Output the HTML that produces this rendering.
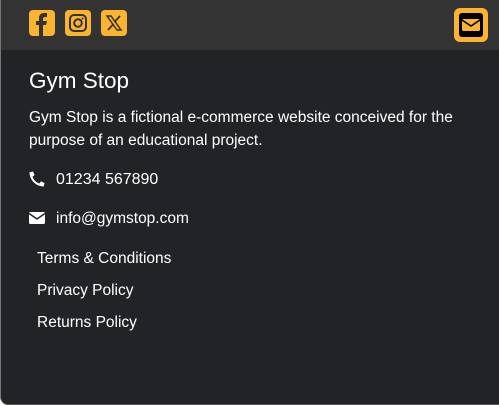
<!DOCTYPE html><html><head><style>
body{margin:0;width:499px;height:405px;background:#fff;overflow:hidden;font-family:"Liberation Sans",sans-serif;}
.w{position:absolute;left:0;top:0;width:498px;height:404px;background:#212326;border-left:1px solid #777;border-bottom:1px solid #555;border-bottom-left-radius:8px;overflow:hidden}
.h{position:absolute;left:0;top:0;width:499px;height:50px;background:#333}
.ic{position:absolute;top:10px;width:26px;height:26px;background:#fbb430;border-radius:4px}
.t{position:absolute;color:#fff;white-space:nowrap}
</style></head><body><div class="w">
<div class="h">
<div class="ic" style="left:28px"><svg width="26" height="26" viewBox="0 0 26 26"><path d="M10 26V15H7v-4h3V8c0-3 2-5 5-5h3v4h-2c-1 0-2 .5-2 2v2h4l-1 4h-3v11z" fill="#333"/></svg></div>
<div class="ic" style="left:64px"><svg width="26" height="26" viewBox="0 0 26 26"><rect x="5" y="5" width="16" height="16" rx="4" fill="none" stroke="#333" stroke-width="2"/><circle cx="13" cy="13" r="3.8" fill="none" stroke="#333" stroke-width="2"/><circle cx="17.5" cy="8.5" r="1" fill="#333"/></svg></div>
<div class="ic" style="left:100px"><svg width="26" height="26" viewBox="0 0 26 26"><path d="M6 6h4l10 14h-4z" fill="none" stroke="#333" stroke-width="1.5"/><path d="M19 6l-5.5 6M7 20l5.5-6" stroke="#333" stroke-width="1.8"/></svg></div>
<div style="position:absolute;left:453px;top:8px;width:34px;height:34px;background:#fbb430;border-radius:6px"><div style="position:absolute;left:5px;top:5px;width:24px;height:24px;background:#000;border-radius:3px"><svg width="24" height="24" viewBox="0 0 24 24"><rect x="3" y="6" width="18" height="12" rx="1.5" fill="#fbb430"/><path d="M3 7l9 6 9-6" fill="none" stroke="#000" stroke-width="1.6"/></svg></div></div>
</div>
<div class="t" style="left:28px;top:68px;font-size:22.5px">Gym Stop</div>
<div class="t" style="left:28px;top:106px;font-size:15.5px;line-height:23px;white-space:normal;width:465px">Gym Stop is a fictional e-commerce website conceived for the purpose of an educational project.</div>
<svg style="position:absolute;left:28px;top:171px" width="16" height="16" viewBox="0 0 16 16"><path d="M15.5 12l-3.5-1.6-1.7 2.1A11 11 0 0 1 3.5 5.7l2.1-1.7L4 0.5 0.5 1.3C0.5 9 7 15.5 14.7 15.5z" fill="#fff"/></svg>
<div class="t" style="left:55px;top:171px;font-size:16px">01234 567890</div>
<svg style="position:absolute;left:28px;top:212px" width="16" height="12" viewBox="0 0 16 12"><rect width="16" height="12" rx="1.5" fill="#fff"/><path d="M0 1.5l8 5.5 8-5.5" fill="none" stroke="#212326" stroke-width="1.5"/></svg>
<div class="t" style="left:55px;top:210px;font-size:15.5px">info@gymstop.com</div>
<div class="t" style="left:36px;top:250px;font-size:15.5px">Terms &amp; Conditions</div>
<div class="t" style="left:36px;top:282px;font-size:15.5px">Privacy Policy</div>
<div class="t" style="left:36px;top:314px;font-size:15.5px">Returns Policy</div>
</div></body></html>
